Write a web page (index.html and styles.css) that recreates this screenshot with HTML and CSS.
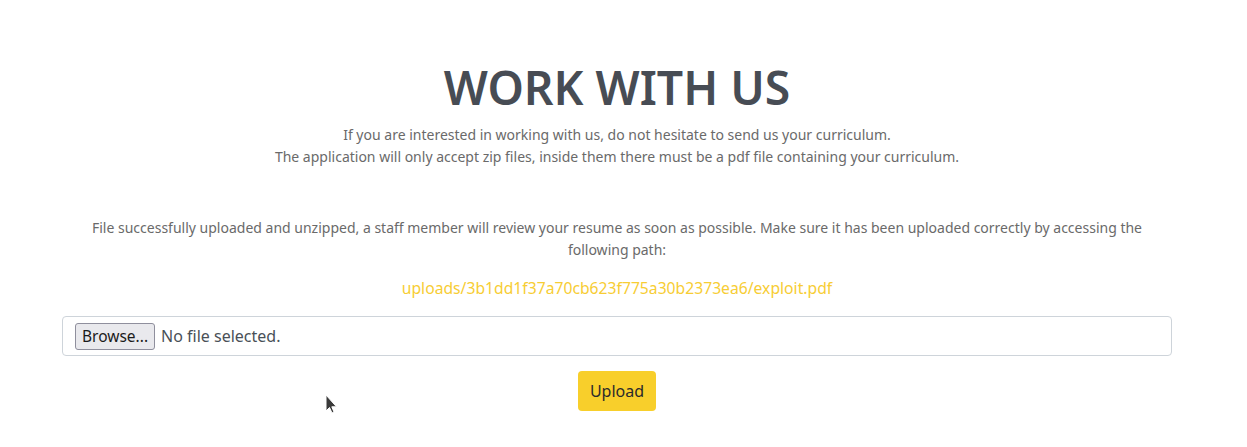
FILE: index.html
```html
<!DOCTYPE html>
<html>
<head>
<meta charset="utf-8">
<link rel="stylesheet" href="styles.css">
</head>
<body>
<main class="container">
  <h1 class="title">WORK WITH US</h1>
  <p class="lead">If you are interested in working with us, do not hesitate to send us your curriculum.<br>The application will only accept zip files, inside them there must be a pdf file containing your curriculum.</p>
  <p class="message">File successfully uploaded and unzipped, a staff member will review your resume as soon as possible. Make sure it has been uploaded correctly by accessing the<br>following path:</p>
  <a class="path" href="#">uploads/3b1dd1f37a70cb623f775a30b2373ea6/exploit.pdf</a>
  <form class="upload-form">
    <div class="file-field">
      <span class="browse">Browse...</span>
      <span class="file-name">No file selected.</span>
    </div>
    <button class="btn-upload" type="button">Upload</button>
  </form>
</main>
<svg class="cursor" width="14" height="22" viewBox="0 0 14 22">
  <path d="M1 1 L1 17 L4.5 13.5 L7 19 L9 18 L6.8 12.8 L11.5 12.8 Z" fill="#3a3a3a" stroke="#ffffff" stroke-width="1"/>
</svg>
</body>
</html>
```
FILE: styles.css
```css
html, body {
  margin: 0;
  padding: 0;
  background: #ffffff;
}
body {
  font-family: "Noto Sans", "Open Sans", sans-serif;
  color: #6c6c6c;
  position: relative;
  height: 447px;
  overflow: hidden;
}
.container {
  width: 1110px;
  margin-left: 62px;
  display: flex;
  flex-direction: column;
  align-items: center;
  text-align: center;
}
.title {
  margin: 58px 0 0;
  font-size: 46.3px;
  line-height: 60px;
  font-weight: 600;
  color: #474c54;
  letter-spacing: 0;
}
.lead {
  margin: 6px 0 0;
  font-size: 14px;
  line-height: 22px;
  color: #6a6a6a;
}
.message {
  margin: 49px 0 0;
  font-size: 14px;
  line-height: 22px;
  color: #6a6a6a;
}
.path {
  margin-top: 16px;
  font-size: 15.7px;
  line-height: 22px;
  color: #f7cd34;
  text-decoration: none;
}
.upload-form {
  width: 100%;
  margin-top: 17px;
  display: flex;
  flex-direction: column;
  align-items: center;
}
.file-field {
  box-sizing: border-box;
  width: 100%;
  height: 40px;
  border: 1px solid #ced4da;
  border-radius: 4px;
  display: flex;
  align-items: center;
  padding-left: 12px;
  gap: 6px;
  text-align: left;
}
.browse {
  box-sizing: border-box;
  height: 27px;
  padding: 0 6px;
  border: 1px solid #8f8f9d;
  border-radius: 3px;
  background: #e9e9ed;
  color: #1b1b1b;
  font-size: 15.5px;
  line-height: 25px;
}
.file-name {
  font-size: 16px;
  color: #495057;
}
.btn-upload {
  margin-top: 15px;
  height: 40px;
  width: 78px;
  border: none;
  border-radius: 4px;
  background: #f8cf2b;
  color: #2b2b2b;
  font-family: inherit;
  font-size: 16px;
  padding: 0;
}
.cursor {
  position: absolute;
  left: 325px;
  top: 394px;
}
```
